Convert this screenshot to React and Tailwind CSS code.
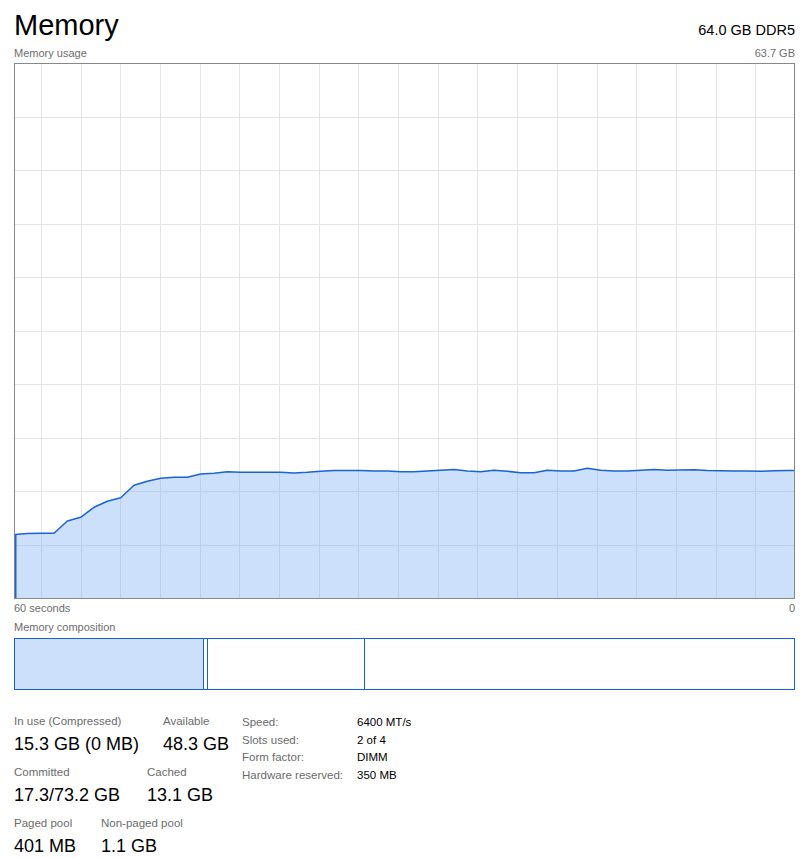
import React from "react";

const ys = [
  534.5, 533.5, 533.3, 533.3, 521, 517.3, 507.3, 501.3, 497.7, 485.3, 481.3, 478.3,
  477.3, 477.3, 474, 473.3, 471.7, 472.3, 472.3, 472.3, 472.3, 473, 472.3, 471.3,
  470.5, 470.5, 470.5, 471, 471, 471.7, 471.7, 471, 470.3, 469.5, 471, 471.7, 470.3,
  471.3, 472.7, 472.7, 470.3, 471, 471, 468.3, 470.3, 471, 471, 470.3, 469.5, 470.3,
  470, 469.7, 470.5, 470.7, 471, 471, 471.3, 470.7, 470.5,
];

function Chart() {
  const W = 779;
  const H = 534;
  const pts = ys.map((y, i) => [Math.max(0, 14 + i * 13.333 - 15), y - 64]);
  pts.push([W, 470.5 - 64]);
  const line = pts.map((p) => `${p[0].toFixed(2)},${p[1].toFixed(2)}`).join(" ");
  const area = `M0,${H} L${line.split(" ").join(" L")} L${W},${H} Z`;
  const vlines = [];
  for (let k = 0; k < 19; k++) vlines.push(Math.round(26 + k * 39.68) + 0.5);
  const hlines = [];
  for (let k = 1; k < 10; k++) hlines.push(Math.round(-1 + 53.5 * k) + 0.5);
  return (
    <svg width={W} height={H} viewBox={`0 0 ${W} ${H}`} className="block">
      {vlines.map((x) => (
        <line key={"v" + x} x1={x} y1={0} x2={x} y2={H} stroke="#e4e4e4" strokeWidth="1" shapeRendering="crispEdges" />
      ))}
      {hlines.map((y) => (
        <line key={"h" + y} x1={0} y1={y} x2={W} y2={y} stroke="#e4e4e4" strokeWidth="1" shapeRendering="crispEdges" />
      ))}
      <path d={area} fill="rgba(128,178,248,0.4)" />
      <polyline points={line} fill="none" stroke="#1a63d6" strokeWidth="1.5" strokeLinejoin="round" />
      <line x1={0.75} y1={pts[0][1]} x2={0.75} y2={H} stroke="#1a63d6" strokeWidth="1.5" />
    </svg>
  );
}

function Stat({ label, value, w }) {
  return (
    <div className={`flex flex-col ${w}`}>
      <div className="text-[11.5px] leading-[15px] text-[#6b6b6b] whitespace-nowrap">{label}</div>
      <div className="mt-[3px] text-[18px] leading-[24px] text-black whitespace-nowrap">{value}</div>
    </div>
  );
}

export default function App() {
  return (
    <div className="w-[809px] h-[858px] bg-white px-[14px] pt-[7px] overflow-hidden font-['Liberation_Sans',Arial,sans-serif]">
      <div className="w-[781px] flex items-baseline justify-between">
        <div className="text-[29px] leading-[36px] text-black">Memory</div>
        <div className="text-[14.5px] leading-[20px] text-black">64.0 GB DDR5</div>
      </div>
      <div className="w-[781px] mt-[3px] flex justify-between text-[11px] leading-[14px] text-[#6d6d6d]">
        <span>Memory usage</span>
        <span>63.7 GB</span>
      </div>
      <div className="mt-[3px] w-[781px] h-[536px] border border-[#888888]">
        <Chart />
      </div>
      <div className="w-[781px] mt-[2px] flex justify-between text-[11px] leading-[14px] text-[#6d6d6d]">
        <span>60 seconds</span>
        <span>0</span>
      </div>
      <div className="mt-[5px] text-[11px] leading-[14px] text-[#6d6d6d]">Memory composition</div>
      <div className="mt-[4px] w-[781px] h-[52px] border border-[#1762d6] flex">
        <div className="w-[189px] h-full bg-[#cce0fc] border-r border-[#1762d6]" />
        <div className="w-[4px] h-full border-r border-[#1762d6]" />
        <div className="w-[157px] h-full border-r border-[#1762d6]" />
        <div className="flex-1 h-full" />
      </div>
      <div className="mt-[24px] flex items-start">
        <div className="w-[228px] flex flex-col gap-[9px]">
          <div className="flex">
            <Stat label="In use (Compressed)" value="15.3 GB (0 MB)" w="w-[149px]" />
            <Stat label="Available" value="48.3 GB" w="" />
          </div>
          <div className="flex">
            <Stat label="Committed" value="17.3/73.2 GB" w="w-[133px]" />
            <Stat label="Cached" value="13.1 GB" w="" />
          </div>
          <div className="flex">
            <Stat label="Paged pool" value="401 MB" w="w-[87px]" />
            <Stat label="Non-paged pool" value="1.1 GB" w="" />
          </div>
        </div>
        <div className="grid grid-cols-[115px_auto] content-start text-[11.5px] leading-[17.7px] whitespace-nowrap">
          <div className="text-[#6b6b6b]">Speed:</div>
          <div className="text-black">6400 MT/s</div>
          <div className="text-[#6b6b6b]">Slots used:</div>
          <div className="text-black">2 of 4</div>
          <div className="text-[#6b6b6b]">Form factor:</div>
          <div className="text-black">DIMM</div>
          <div className="text-[#6b6b6b]">Hardware reserved:</div>
          <div className="text-black">350 MB</div>
        </div>
      </div>
    </div>
  );
}
